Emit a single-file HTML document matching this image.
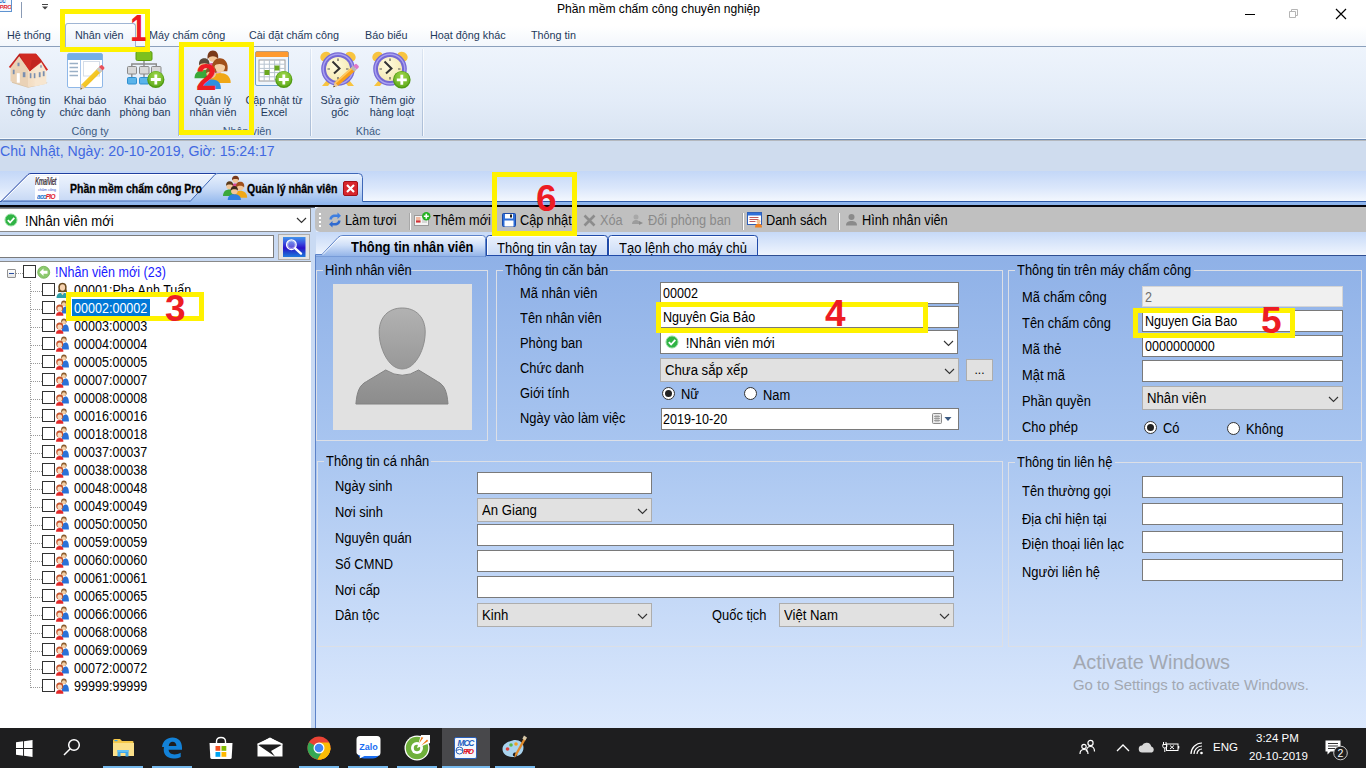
<!DOCTYPE html>
<html lang="vi"><head><meta charset="utf-8"><title>Phần mềm chấm công chuyên nghiệp</title>
<style>

*{box-sizing:border-box;margin:0;padding:0}
html,body{width:1366px;height:768px;overflow:hidden;background:#fff;font-family:"Liberation Sans",sans-serif;color:#000}
.a{position:absolute}
.t{position:absolute;white-space:nowrap;line-height:1}
.lbl{position:absolute;white-space:nowrap;font-size:13.8px;line-height:16px;height:16px;color:#000}
.inp{position:absolute;background:#fff;border:1px solid #7a7a7a;font-size:13.8px;line-height:20px;padding-left:2px;white-space:nowrap;overflow:hidden}
.cmb{position:absolute;background:#e1e1e1;border:1px solid #adadad;font-size:14px;line-height:21px;padding-left:4px;white-space:nowrap;overflow:hidden}
.grp{position:absolute;border:1px solid #c9d6ea}
.grp>span{position:absolute;top:-9px;left:6px;font-size:13.3px;line-height:16px;padding:0 2px;white-space:nowrap}
.rb{position:absolute;width:13px;height:13px;border-radius:50%;background:#fff;border:1px solid #333}
.rb.on::after{content:"";position:absolute;left:2px;top:2px;width:7px;height:7px;border-radius:50%;background:#222}
.ybox{position:absolute;border:4px solid #fff200}
.num{position:absolute;font-weight:bold;color:#ed1c24;font-size:37px;line-height:1;white-space:nowrap}
.rl{position:absolute;font-size:10.8px;line-height:12px;color:#1e395b;text-align:center;white-space:nowrap;transform:translateX(-50%)}
.cb{position:absolute;width:13px;height:13px;background:#fff;border:1px solid #333}
.tr{position:absolute;font-size:13.8px;line-height:18px;height:16px;white-space:nowrap}
.chev{position:absolute;width:10px;height:6px}
.sx{transform:scaleX(var(--k));transform-origin:0 50%}
.sxi{display:inline-block;transform:scaleX(.91);transform-origin:0 50%}
.cmb .sxi{transform:scaleX(.94)}
.tr{transform:scaleX(.91);transform-origin:0 50%}
.lbl{transform:scaleX(.935);transform-origin:0 50%}

</style></head><body>
<div class="a" style="left:0;top:0;width:1366px;height:46px;background:linear-gradient(#fff 0,#fff 26px,#f3f7fc 45px)"></div>
<div class="t" style="left:557px;top:3px;font-size:12.1px;color:#000">Phần mềm chấm công chuyên nghiệp</div>
<svg class="a" style="left:1240px;top:5px" width="120" height="20" viewBox="0 0 120 20"><path d="M5 9.5h10" stroke="#000" stroke-width="1"/><path d="M49.5 6.5h6v6h-6zM51.5 6.5v-2h6v6h-2" fill="none" stroke="#b5b5b5" stroke-width="1"/><path d="M96 4l10 10M106 4l-10 10" stroke="#000" stroke-width="1.2"/></svg>
<div class="a" style="left:0;top:0;width:12px;height:12px;background:#f4f8fe;border-right:1px solid #5f93d0;border-bottom:1px solid #5f93d0;overflow:hidden"><div class="t" style="left:-5px;top:-3px;font-size:7px;font-weight:bold;font-style:italic;color:#1f6fc8;letter-spacing:-.4px">acc</div><div class="t" style="left:-4px;top:4px;font-size:6px;font-weight:bold;font-style:italic;letter-spacing:-.4px"><span style="color:#1f6fc8">S</span><span style="color:#e0202a">PRO</span></div></div>
<div class="a" style="left:21px;top:2px;width:1px;height:16px;background:#8a9bb5"></div>
<svg class="a" style="left:41px;top:3px" width="8" height="8" viewBox="0 0 8 8"><path d="M1 1.5h6" stroke="#444" stroke-width="1"/><path d="M1 3.5h6l-3 3z" fill="#444"/></svg>
<div class="a" style="left:0;top:46px;width:1366px;height:1px;background:#8ba0bc"></div>
<div class="a" style="left:65px;top:23px;width:71px;height:24px;background:linear-gradient(#fdfeff,#eaf1fb);border:1px solid #9fb5d4;border-bottom:none;border-radius:3px 3px 0 0"></div>
<div class="t" style="left:7px;top:30px;font-size:10.8px;color:#1e395b">Hệ thống</div>
<div class="t" style="left:75px;top:30px;font-size:10.8px;color:#1e395b">Nhân viên</div>
<div class="t" style="left:149px;top:30px;font-size:10.8px;color:#1e395b">Máy chấm công</div>
<div class="t" style="left:249px;top:30px;font-size:10.8px;color:#1e395b">Cài đặt chấm công</div>
<div class="t" style="left:365px;top:30px;font-size:10.8px;color:#1e395b">Báo biểu</div>
<div class="t" style="left:430px;top:30px;font-size:10.8px;color:#1e395b">Hoạt động khác</div>
<div class="t" style="left:531px;top:30px;font-size:10.8px;color:#1e395b">Thông tin</div>
<div class="a" style="left:0;top:47px;width:1366px;height:91px;background:linear-gradient(#eef4fc,#e3ecf8 60%,#d9e4f2)"></div>
<div class="a" style="left:0;top:138px;width:1366px;height:1px;background:#f4f8fd"></div>
<div class="a" style="left:0;top:139px;width:1366px;height:1px;background:#6f8db5"></div>
<div class="a" style="left:0;top:140px;width:1366px;height:1px;background:#b4b8be"></div>
<div class="a" style="left:178px;top:49px;width:1px;height:87px;background:linear-gradient(rgba(160,180,205,0.2),#a9bcd6)"></div>
<div class="a" style="left:179px;top:49px;width:1px;height:87px;background:rgba(255,255,255,.7)"></div>
<div class="a" style="left:310px;top:49px;width:1px;height:87px;background:linear-gradient(rgba(160,180,205,0.2),#a9bcd6)"></div>
<div class="a" style="left:311px;top:49px;width:1px;height:87px;background:rgba(255,255,255,.7)"></div>
<div class="a" style="left:422px;top:49px;width:1px;height:87px;background:linear-gradient(rgba(160,180,205,0.2),#a9bcd6)"></div>
<div class="a" style="left:423px;top:49px;width:1px;height:87px;background:rgba(255,255,255,.7)"></div>
<svg class="a" style="left:0;top:47px" width="430" height="48" viewBox="0 47 430 48">
<defs><radialGradient id="gp" cx=".5" cy=".3" r=".8"><stop offset="0" stop-color="#9fd64a"/><stop offset="1" stop-color="#5aa818"/></radialGradient><linearGradient id="gw" x1="0" x2="1"><stop offset="0" stop-color="#f3dcc0"/><stop offset="1" stop-color="#fbeedd"/></linearGradient><linearGradient id="gr" x1="0" x2="0" y1="0" y2="1"><stop offset="0" stop-color="#b81c1c"/><stop offset="1" stop-color="#d83028"/></linearGradient><linearGradient id="gy" x1="0" x2="1" y1="0" y2="1"><stop offset="0" stop-color="#ffe34a"/><stop offset="1" stop-color="#e8a800"/></linearGradient><radialGradient id="gf" cx=".4" cy=".35" r=".8"><stop offset="0" stop-color="#fffbe0"/><stop offset="1" stop-color="#f3e6a8"/></radialGradient></defs>
<g transform="translate(8.800 53.700)"><path d="M3 29l16.300 5 18-4 1.500-1.500-19 3.500-16-4.500z" fill="#d8c4a8"/><path d="M1.700 13.500L10.400 2l9 12v19.600L1.700 27.600z" fill="#ead2b6"/><path d="M19.300 14L32.500 7.500l4.800 8V30l-18 3.600z" fill="url(#gw)"/><path d="M26 17l6.500-9.500 5 8.500v14l-11.500 2.500z" fill="#f7e6d0"/><path d="M10.400 0H27.200L32.500 6.400 39.300 16l-1.800 1-5-8.500L21 17.500 10.400 2.500 1.500 14.300 0 13.300z" fill="url(#gr)"/><path d="M10.400 0H27.200l5.300 6.400L21 17.500z" fill="#cf2a22"/><path d="M23 6.400h9.500L21 17.500z" fill="#c0241e"/><rect x="8.700" y="9" width="2" height="3.500" fill="#7a8fb0"/><rect x="4" y="16" width="1.800" height="4.500" fill="#7a8fb0"/><rect x="8" y="19.500" width="3" height="9.500" fill="#fff"/><rect x="14" y="18.500" width="2.600" height="5" fill="#7a8fb0"/><rect x="21" y="19.500" width="1.600" height="5" fill="#7a8fb0"/><rect x="25" y="19.500" width="1.600" height="5" fill="#7a8fb0"/><rect x="30" y="18.500" width="1.800" height="5" fill="#7a8fb0"/><rect x="34" y="17.500" width="1.800" height="5" fill="#7a8fb0"/><rect x="31.500" y="11.500" width="1.400" height="2.500" fill="#7a8fb0"/></g>
<g><rect x="67.500" y="53.500" width="35" height="34" rx="1.500" fill="#fff" stroke="#8fb8e8"/><path d="M67.500 55q0-1.500 1.500-1.500h32q1.500 0 1.500 1.500v5h-35z" fill="#74aee6"/><path d="M80.500 60v27" stroke="#a9c8ee"/><path d="M69.500 63.500h8.500M69.500 67.500h8.500M69.500 71.500h8.500M69.500 75.500h8.500" stroke="#9ab0c6" stroke-width="1.300"/><rect x="83.500" y="61.500" width="16" height="14.500" fill="#fff" stroke="#d5dde8"/><path d="M80.400 89.500l1.300-5.300L98.500 67.500l3.500 3.500-17 16.700z" fill="url(#gy)"/><path d="M80.400 89.500l1.300-5.300 3.300 3.500z" fill="#e8c8a0"/><path d="M80.400 89.500l.5-1.800 1.200 1.200z" fill="#333"/><path d="M96.500 69.500l2.500-2.500 3.500 3.500-2.500 2.500z" fill="#c8c8c8"/><path d="M99 67l1.500-1.500q1-1 2 0l1.500 1.500q1 1 0 2L102.500 70.500z" fill="#e8505a"/></g>
<g><path d="M144 60v4M131.800 67v-3h24.500v3M144 64v3M131.800 74v4M144 74v4" stroke="#8a8a8a" stroke-width="1.400" fill="none"/><rect x="136" y="51.500" width="16" height="9" rx="1.500" fill="#7cc01e" stroke="#5a9a10"/><rect x="127.500" y="66.500" width="9" height="7.500" rx="1" fill="#d8d8d8" stroke="#8a8a8a"/><rect x="139.500" y="66.500" width="9.500" height="7.500" rx="1" fill="#d8d8d8" stroke="#8a8a8a"/><rect x="151.500" y="66.500" width="9.500" height="7.500" rx="1" fill="#d8d8d8" stroke="#8a8a8a"/><rect x="127.500" y="77.500" width="9" height="6.500" rx="1" fill="#5ab4ea" stroke="#2f8fd0"/><rect x="139.500" y="77.500" width="9.500" height="6.500" rx="1" fill="#5ab4ea" stroke="#2f8fd0"/><circle cx="155.8" cy="79.5" r="8.6" fill="#4f9a12"/><circle cx="155.8" cy="78.9" r="7.6" fill="url(#gp)"/><path d="M155.8 74.5v10M150.8 79.5h10" stroke="#fff" stroke-width="2.800"/></g>
<g transform="translate(194.500 50) scale(1.150 1.180)"><circle cx="16" cy="6" r="4" fill="#f2c79a"/><path d="M11.500 8c-.8-5 1.500-7.500 4.500-7.500s5.300 2.500 4.500 7.500c-1-3.500-8-3.500-9 0z" fill="#7a3a1a"/><path d="M9 19c0-6 3-8 7-8s7 2 7 8z" fill="#e0559a"/><circle cx="8.500" cy="13" r="4.200" fill="#f2c79a"/><path d="M4 13c-.5-4 1.500-6 4.500-6s5 2 4.500 6c-1.500-2.500-7.500-2.500-9 0z" fill="#5a4a3a"/><path d="M0 24c0-5 3.500-7 8.500-7S17 19 17 24z" fill="#3aa83a"/><path d="M15.500 18c-1.500-7 2-11 6.500-11s8 4 6.500 11z" fill="#a0501c"/><circle cx="22" cy="14.500" r="4.600" fill="#f4cfa6"/><path d="M17 14c0-4 2-6.500 5-6.500s5.500 2.500 5 6.500c-2-2.500-8-3-10 0z" fill="#a0501c"/><path d="M13 28c0-6 4-8.500 9-8.500s9.500 2.500 9.500 8.500z" fill="#f0a818"/><circle cx="14.500" cy="20" r="4.200" fill="#f2c79a"/><path d="M10 20c-.5-4 1.500-6 4.500-6s5 2 4.500 6c-1.500-2.500-7.500-2.500-9 0z" fill="#8a5a2a"/><path d="M6 33c0-6 3.500-8 8.500-8S23 27 23 33z" fill="#2f8fe0"/></g>
<g><rect x="255.500" y="51.500" width="33" height="34" rx="1.500" fill="#eef5fc" stroke="#6f9fd0"/><path d="M255.500 53q0-1.500 1.500-1.500h30q1.500 0 1.500 1.500v4h-33z" fill="#ff9a2e"/><rect x="259" y="60" width="26" height="21" fill="#fff" stroke="#9a9a9a" stroke-width="1"/><path d="M264.200 60v21M269.400 60v21M274.600 60v21M279.800 60v21M259 64.200h26M259 68.400h26M259 72.600h26M259 76.800h26" stroke="#b8c4d0" stroke-width="1"/><rect x="264.500" y="70" width="5" height="5" fill="#6aa81e"/><rect x="274.500" y="65.500" width="5" height="5" fill="#6aa81e"/><circle cx="283.8" cy="79.5" r="8.6" fill="#4f9a12"/><circle cx="283.8" cy="78.9" r="7.6" fill="url(#gp)"/><path d="M283.8 74.5v10M278.8 79.5h10" stroke="#fff" stroke-width="2.800"/></g>
<g><ellipse cx="325.5" cy="56.500" rx="5.500" ry="4.500" fill="#f8c440" transform="rotate(-35 325.5 56.500)"/><ellipse cx="350.5" cy="56.500" rx="5.500" ry="4.500" fill="#f8c440" transform="rotate(35 350.5 56.500)"/><path d="M327 80l-5 6h6l3-4zM349 80l5 6h-6l-3-4z" fill="#f8c440"/><circle cx="338" cy="69" r="16.800" fill="#7468d4"/><circle cx="338" cy="69" r="14.800" fill="none" stroke="#a9a0f0" stroke-width="1.500"/><circle cx="338" cy="69" r="12" fill="url(#gf)"/><path d="M338 58.500v2.500M338 77v2.500M327.5 69h2.500M346 69h2.500" stroke="#555" stroke-width="1.200"/><path d="M332.5 61.500l7 7-5.500 5" fill="none" stroke="#333" stroke-width="2"/><path d="M333.300 87.300l1.500-5 17.500-15.500 3.300 3.600-17.500 15.400z" fill="#f8a018"/><path d="M334.800 82.300l17.500-15.500 1.200 1.300-17.600 15.500z" fill="#ffc860"/><path d="M333.300 87.300l1.500-5 3.300 3.500z" fill="#e8c8a0"/><path d="M333.300 87.300l.6-1.800 1.200 1.200z" fill="#333"/><path d="M350.800 68l2.500-2.200 3.300 3.600-2.500 2.200z" fill="#b8b8b8"/><path d="M353.300 65.800l1.800-1.600q1-.8 2 .2l1.500 1.600q.8 1-.2 1.800L356.600 69.400z" fill="#e078c8"/></g>
<g><ellipse cx="377.5" cy="56.500" rx="5.500" ry="4.500" fill="#f8c440" transform="rotate(-35 377.5 56.500)"/><ellipse cx="402.5" cy="56.500" rx="5.500" ry="4.500" fill="#f8c440" transform="rotate(35 402.5 56.500)"/><path d="M379 80l-5 6h6l3-4zM401 80l5 6h-6l-3-4z" fill="#f8c440"/><circle cx="390" cy="69" r="16.800" fill="#7468d4"/><circle cx="390" cy="69" r="14.800" fill="none" stroke="#a9a0f0" stroke-width="1.500"/><circle cx="390" cy="69" r="12" fill="url(#gf)"/><path d="M390 58.500v2.500M390 77v2.500M379.5 69h2.500M398 69h2.500" stroke="#555" stroke-width="1.200"/><path d="M384.5 61.500l7 7-5.500 5" fill="none" stroke="#333" stroke-width="2"/><circle cx="401.8" cy="79.8" r="8.8" fill="#4f9a12"/><circle cx="401.8" cy="79.2" r="7.800000000000001" fill="url(#gp)"/><path d="M401.8 74.8v10M396.8 79.8h10" stroke="#fff" stroke-width="2.800"/></g>
</svg>
<div class="rl" style="left:28px;top:94px">Thông tin<br>công ty</div>
<div class="rl" style="left:85px;top:94px">Khai báo<br>chức danh</div>
<div class="rl" style="left:145px;top:94px">Khai báo<br>phòng ban</div>
<div class="rl" style="left:213px;top:94px">Quản lý<br>nhân viên</div>
<div class="rl" style="left:274px;top:94px">Cập nhật từ<br>Excel</div>
<div class="rl" style="left:340px;top:94px">Sửa giờ<br>gốc</div>
<div class="rl" style="left:392px;top:94px">Thêm giờ<br>hàng loạt</div>
<div class="rl" style="left:90px;top:125px;color:#3b5a82">Công ty</div>
<div class="rl" style="left:247px;top:125px;color:#3b5a82">Nhân viên</div>
<div class="rl" style="left:368px;top:125px;color:#3b5a82">Khác</div>
<div class="a" style="left:0;top:141px;width:1366px;height:30px;background:#cfdcee"></div>
<div class="t" style="left:0;top:144px;font-size:14.14px;color:#4169e1">Chủ Nhật, Ngày: 20-10-2019, Giờ: 15:24:17</div>
<div class="a" style="left:0;top:171px;width:1366px;height:34px;background:linear-gradient(#c3d7f7,#dbe7fb 50%,#f4f8fe 90%)"></div>
<div class="a" style="left:0;top:201px;width:1366px;height:1px;background:#2f5aa8"></div>
<div class="a" style="left:0;top:202px;width:1366px;height:3px;background:#8db4ec"></div>
<div class="a" style="left:0;top:205px;width:1366px;height:2px;background:#05050c"></div>
<div class="a" style="left:0;top:207px;width:315px;height:1px;background:#5a6270"></div>
<svg class="a" style="left:0;top:171px" width="380" height="34" viewBox="0 0 380 34">
<defs><linearGradient id="da" x1="0" x2="0" y1="0" y2="1"><stop offset="0" stop-color="#e9f1fd"/><stop offset=".5" stop-color="#c6d9f6"/><stop offset="1" stop-color="#8db4ec"/></linearGradient>
<linearGradient id="di" x1="0" x2="0" y1="0" y2="1"><stop offset="0" stop-color="#eef4fd"/><stop offset=".5" stop-color="#dde8fa"/><stop offset="1" stop-color="#c6d8f5"/></linearGradient></defs>
<path d="M1 30.500L28 3.500q1-1 3-1H216L190 30.500z" fill="url(#di)"/>
<path d="M2.500 30.500L29 4.200q1-.7 3-.7H214" fill="none" stroke="#fff" stroke-width="1"/>
<path d="M1 30.500L28 3.500q1-1 3-1H216" fill="none" stroke="#1f3fa0" stroke-width="1"/>
<path d="M1 30h189" stroke="#3f68b8" stroke-width="1"/>
<path d="M190 30.500L215 3.500q1-1 3-1H358.500q4 0 4 4V30.500V34H0V31z" fill="url(#da)"/>
<path d="M190 30.500L215 3.500q1-1 3-1H358.500q4 0 4 4V30.500" fill="none" stroke="#3f68b8" stroke-width="1"/>
</svg>
<div class="a" style="left:35px;top:176px;width:24px;height:24px;background:#fdfdff;overflow:hidden"><div class="t" style="left:0;top:1px;font-size:9px;font-weight:bold;font-style:italic;color:#4a4048;letter-spacing:-.8px;transform:scale(.66,1.2);transform-origin:0 0">KmaiViet</div><div class="t" style="left:3px;top:12px;font-size:4px;color:#3a5fd0;letter-spacing:-.2px">chấm công</div><div class="t" style="left:2px;top:17px;font-size:7.500px;font-weight:bold;font-style:italic;letter-spacing:-.8px;transform:scale(.86,.95);transform-origin:0 0"><span style="color:#1f78d0">acc</span><span style="color:#e0202a">PIO</span></div></div>
<div class="a" style="left:69px;top:181px;width:133px;height:16px;overflow:hidden"><div class="t sx" style="left:1px;top:2px;font-size:12px;font-weight:bold;-webkit-text-stroke:.3px #000;--k:.875">Phần mềm chấm công Pro</div></div>
<svg class="a" style="left:223px;top:175px" width="25" height="25" viewBox="0 0 32 32">
<circle cx="16" cy="6" r="4" fill="#f2c79a"/><path d="M11.500 7c-.5-4 1.500-6 4.500-6s5 2 4.500 6c-1-2.500-8-2.500-9 0z" fill="#7a3a1a"/><path d="M9 19c0-6 3-8 7-8s7 2 7 8z" fill="#d8458a"/>
<circle cx="8.500" cy="14" r="4.200" fill="#f2c79a"/><path d="M4 14c-.5-4 1.500-6 4.500-6s5 2 4.500 6c-1.500-2.500-7.500-2.500-9 0z" fill="#5a3a1a"/><path d="M0 27c0-6 3.500-8.500 8.500-8.500S17 21 17 27z" fill="#3aa83a"/>
<circle cx="22" cy="15" r="4.500" fill="#f2c79a"/><path d="M17 16c-1-5 1.500-7.500 5-7.500s6 2.500 5 7.500c-1.500-3-8.500-3-10 0z" fill="#a0501c"/><path d="M13 29c0-6 4-9 9-9s9 3 9 9z" fill="#f0a818"/>
<circle cx="14.500" cy="20.500" r="4.200" fill="#f2c79a"/><path d="M10 20c-.5-4 1.500-6 4.500-6s5 2 4.500 6c-1.500-2.500-7.500-2.500-9 0z" fill="#3a2a1a"/><path d="M6 32c0-5 3.500-7.500 8.500-7.500S23 27 23 32z" fill="#2f7fe0"/>
</svg>
<div class="t sx" style="left:247px;top:183px;font-size:12px;font-weight:bold;-webkit-text-stroke:.3px #000;--k:.875">Quản lý nhân viên</div>
<svg class="a" style="left:343px;top:181px" width="15" height="15" viewBox="0 0 15 15"><rect x="0.500" y="0.500" width="14" height="14" rx="1.500" fill="#d8262c" stroke="#a01018"/><path d="M4 4l7 7M11 4l-7 7" stroke="#fff" stroke-width="2.200"/></svg>
<div class="a" style="left:0;top:208px;width:316px;height:520px;background:#c9daf3"></div>
<div class="a" style="left:0;top:208px;width:311px;height:24px;background:#fff;border:1px solid #8a8a8a;border-left:none"></div>
<svg class="a" style="left:4px;top:213px" width="14" height="14" viewBox="0 0 14 14"><circle cx="7" cy="7" r="6" fill="#2fb344"/><circle cx="7" cy="7" r="6" fill="none" stroke="#8fdc9a" stroke-width="1"/><path d="M3.8 7.2l2.3 2.3 4.2-4.6" fill="none" stroke="#fff" stroke-width="1.8"/></svg>
<div class="t sx" style="left:25px;top:214px;font-size:14px;--k:.936">!Nhân viên mới</div>
<svg class="a" style="left:296px;top:217px" width="11" height="7" viewBox="0 0 11 7"><path d="M1 1l4.5 4.5L10 1" fill="none" stroke="#333" stroke-width="1.2"/></svg>
<div class="a" style="left:0;top:235px;width:274px;height:23px;background:#fff;border:1px solid #7a7a7a;border-left:none"></div>
<div class="a" style="left:278px;top:234px;width:32px;height:26px;background:#e3e3e3;border:1px solid #adadad"></div>
<svg class="a" style="left:283px;top:237px" width="23" height="20" viewBox="0 0 23 20"><defs><linearGradient id="sg" x1="0" x2="0" y1="0" y2="1"><stop offset="0" stop-color="#3f93ea"/><stop offset=".3" stop-color="#3a4fe0"/><stop offset=".55" stop-color="#2a10c8"/><stop offset=".8" stop-color="#1f4fd0"/><stop offset="1" stop-color="#1f78dc"/></linearGradient></defs><rect width="22.500" height="20" fill="url(#sg)"/><circle cx="8.400" cy="7.700" r="4.800" fill="#fff" fill-opacity=".25" stroke="#fff" stroke-width="1.300"/><circle cx="8.400" cy="7.700" r="3.600" fill="none" stroke="#fff" stroke-opacity=".6" stroke-width=".6"/><path d="M12.200 11.300l5.800 5.300" stroke="#fff" stroke-width="2.400" stroke-linecap="round"/></svg>
<div class="a" style="left:0;top:261px;width:311px;height:467px;background:#fff;border-top:1px solid #8a8a8a"></div>
<div class="a" style="left:30px;top:281px;width:1px;height:407px;border-left:1px dotted #9a9a9a"></div>
<div class="a" style="left:16px;top:273px;width:7px;height:1px;border-top:1px dotted #9a9a9a"></div>
<div class="a" style="left:7px;top:269px;width:9px;height:9px;border:1px solid #919191;background:linear-gradient(#fff,#e4e4e4);border-radius:1px"></div><div class="a" style="left:9px;top:273px;width:5px;height:1px;background:#2b4fa0"></div>
<div class="cb" style="left:23px;top:265px"></div>
<svg class="a" style="left:37px;top:265px" width="14" height="14" viewBox="0 0 14 14"><circle cx="6.700" cy="7.300" r="6" fill="#8cc96e" stroke="#6fb050" stroke-width=".8"/><path d="M2.500 7.300L6.500 3.500V5.800H10.500V8.800H6.500V11.100z" fill="#fff"/></svg>
<div class="tr" style="left:55px;top:264px;color:#1a1aff">!Nhân viên mới (23)</div>
<div class="a" style="left:31px;top:291px;width:11px;height:1px;border-top:1px dotted #9a9a9a"></div>
<div class="cb" style="left:42px;top:283px"></div>
<svg class="a" style="left:56px;top:282px" width="13" height="16" viewBox="0 0 13 16"><path d="M2.5 7c-.8-3.5.8-6.3 4-6.3s4.8 2.800 4 6.300l.5 3h-9z" fill="#6b4a1e"/><ellipse cx="6.500" cy="5.500" rx="2.600" ry="3.200" fill="#f7d3b0"/><path d="M.5 16c0-4 2.500-5.200 6-5.200s6 1.200 6 5.200z" fill="#2e9fa8"/><path d="M4.800 10.800l1.700 2.500 1.700-2.500z" fill="#f7d3b0"/></svg>
<div class="tr" style="left:74px;top:282px">00001:Pha Anh Tuấn</div>
<div class="a" style="left:31px;top:309px;width:11px;height:1px;border-top:1px dotted #9a9a9a"></div>
<div class="cb" style="left:42px;top:301px"></div>
<svg class="a" style="left:56px;top:300px" width="13" height="16" viewBox="0 0 13 16"><circle cx="7.900" cy="3.300" r="2.700" fill="#8a5a2a"/><circle cx="7.900" cy="4.300" r="2" fill="#f4cfa6"/><path d="M5.800 13.500C5.800 8.500 7.800 6.600 9.800 6.600S12.900 8.800 12.900 13.500z" fill="#2a72d8"/><circle cx="3.700" cy="8.100" r="3.500" fill="#c8522a"/><circle cx="3.700" cy="9" r="2.400" fill="#f8dcc0"/><path d="M0 15.800C0 13 1.500 12 3.700 12S7.400 13 7.400 15.800z" fill="#e22828"/></svg>
<div class="a" style="left:72px;top:299px;width:78px;height:17px;background:#0078d7"></div>
<div class="tr" style="left:74px;top:300px;color:#fff">00002:00002</div>
<div class="a" style="left:31px;top:327px;width:11px;height:1px;border-top:1px dotted #9a9a9a"></div>
<div class="cb" style="left:42px;top:319px"></div>
<svg class="a" style="left:56px;top:318px" width="13" height="16" viewBox="0 0 13 16"><circle cx="7.900" cy="3.300" r="2.700" fill="#8a5a2a"/><circle cx="7.900" cy="4.300" r="2" fill="#f4cfa6"/><path d="M5.800 13.500C5.800 8.500 7.800 6.600 9.800 6.600S12.900 8.800 12.900 13.500z" fill="#2a72d8"/><circle cx="3.700" cy="8.100" r="3.500" fill="#c8522a"/><circle cx="3.700" cy="9" r="2.400" fill="#f8dcc0"/><path d="M0 15.800C0 13 1.500 12 3.700 12S7.400 13 7.400 15.800z" fill="#e22828"/></svg>
<div class="tr" style="left:74px;top:318px">00003:00003</div>
<div class="a" style="left:31px;top:345px;width:11px;height:1px;border-top:1px dotted #9a9a9a"></div>
<div class="cb" style="left:42px;top:337px"></div>
<svg class="a" style="left:56px;top:336px" width="13" height="16" viewBox="0 0 13 16"><circle cx="7.900" cy="3.300" r="2.700" fill="#8a5a2a"/><circle cx="7.900" cy="4.300" r="2" fill="#f4cfa6"/><path d="M5.800 13.500C5.800 8.500 7.800 6.600 9.800 6.600S12.900 8.800 12.900 13.500z" fill="#2a72d8"/><circle cx="3.700" cy="8.100" r="3.500" fill="#c8522a"/><circle cx="3.700" cy="9" r="2.400" fill="#f8dcc0"/><path d="M0 15.800C0 13 1.500 12 3.700 12S7.400 13 7.400 15.800z" fill="#e22828"/></svg>
<div class="tr" style="left:74px;top:336px">00004:00004</div>
<div class="a" style="left:31px;top:363px;width:11px;height:1px;border-top:1px dotted #9a9a9a"></div>
<div class="cb" style="left:42px;top:355px"></div>
<svg class="a" style="left:56px;top:354px" width="13" height="16" viewBox="0 0 13 16"><circle cx="7.900" cy="3.300" r="2.700" fill="#8a5a2a"/><circle cx="7.900" cy="4.300" r="2" fill="#f4cfa6"/><path d="M5.800 13.500C5.800 8.500 7.800 6.600 9.800 6.600S12.900 8.800 12.900 13.500z" fill="#2a72d8"/><circle cx="3.700" cy="8.100" r="3.500" fill="#c8522a"/><circle cx="3.700" cy="9" r="2.400" fill="#f8dcc0"/><path d="M0 15.800C0 13 1.500 12 3.700 12S7.400 13 7.400 15.800z" fill="#e22828"/></svg>
<div class="tr" style="left:74px;top:354px">00005:00005</div>
<div class="a" style="left:31px;top:381px;width:11px;height:1px;border-top:1px dotted #9a9a9a"></div>
<div class="cb" style="left:42px;top:373px"></div>
<svg class="a" style="left:56px;top:372px" width="13" height="16" viewBox="0 0 13 16"><circle cx="7.900" cy="3.300" r="2.700" fill="#8a5a2a"/><circle cx="7.900" cy="4.300" r="2" fill="#f4cfa6"/><path d="M5.800 13.500C5.800 8.500 7.800 6.600 9.800 6.600S12.900 8.800 12.900 13.500z" fill="#2a72d8"/><circle cx="3.700" cy="8.100" r="3.500" fill="#c8522a"/><circle cx="3.700" cy="9" r="2.400" fill="#f8dcc0"/><path d="M0 15.800C0 13 1.500 12 3.700 12S7.400 13 7.400 15.800z" fill="#e22828"/></svg>
<div class="tr" style="left:74px;top:372px">00007:00007</div>
<div class="a" style="left:31px;top:399px;width:11px;height:1px;border-top:1px dotted #9a9a9a"></div>
<div class="cb" style="left:42px;top:391px"></div>
<svg class="a" style="left:56px;top:390px" width="13" height="16" viewBox="0 0 13 16"><circle cx="7.900" cy="3.300" r="2.700" fill="#8a5a2a"/><circle cx="7.900" cy="4.300" r="2" fill="#f4cfa6"/><path d="M5.800 13.500C5.800 8.500 7.800 6.600 9.800 6.600S12.900 8.800 12.900 13.500z" fill="#2a72d8"/><circle cx="3.700" cy="8.100" r="3.500" fill="#c8522a"/><circle cx="3.700" cy="9" r="2.400" fill="#f8dcc0"/><path d="M0 15.800C0 13 1.500 12 3.700 12S7.400 13 7.400 15.800z" fill="#e22828"/></svg>
<div class="tr" style="left:74px;top:390px">00008:00008</div>
<div class="a" style="left:31px;top:417px;width:11px;height:1px;border-top:1px dotted #9a9a9a"></div>
<div class="cb" style="left:42px;top:409px"></div>
<svg class="a" style="left:56px;top:408px" width="13" height="16" viewBox="0 0 13 16"><circle cx="7.900" cy="3.300" r="2.700" fill="#8a5a2a"/><circle cx="7.900" cy="4.300" r="2" fill="#f4cfa6"/><path d="M5.800 13.500C5.800 8.500 7.800 6.600 9.800 6.600S12.900 8.800 12.900 13.500z" fill="#2a72d8"/><circle cx="3.700" cy="8.100" r="3.500" fill="#c8522a"/><circle cx="3.700" cy="9" r="2.400" fill="#f8dcc0"/><path d="M0 15.800C0 13 1.500 12 3.700 12S7.400 13 7.400 15.800z" fill="#e22828"/></svg>
<div class="tr" style="left:74px;top:408px">00016:00016</div>
<div class="a" style="left:31px;top:435px;width:11px;height:1px;border-top:1px dotted #9a9a9a"></div>
<div class="cb" style="left:42px;top:427px"></div>
<svg class="a" style="left:56px;top:426px" width="13" height="16" viewBox="0 0 13 16"><circle cx="7.900" cy="3.300" r="2.700" fill="#8a5a2a"/><circle cx="7.900" cy="4.300" r="2" fill="#f4cfa6"/><path d="M5.800 13.500C5.800 8.500 7.800 6.600 9.800 6.600S12.900 8.800 12.900 13.500z" fill="#2a72d8"/><circle cx="3.700" cy="8.100" r="3.500" fill="#c8522a"/><circle cx="3.700" cy="9" r="2.400" fill="#f8dcc0"/><path d="M0 15.800C0 13 1.500 12 3.700 12S7.400 13 7.400 15.800z" fill="#e22828"/></svg>
<div class="tr" style="left:74px;top:426px">00018:00018</div>
<div class="a" style="left:31px;top:453px;width:11px;height:1px;border-top:1px dotted #9a9a9a"></div>
<div class="cb" style="left:42px;top:445px"></div>
<svg class="a" style="left:56px;top:444px" width="13" height="16" viewBox="0 0 13 16"><circle cx="7.900" cy="3.300" r="2.700" fill="#8a5a2a"/><circle cx="7.900" cy="4.300" r="2" fill="#f4cfa6"/><path d="M5.800 13.500C5.800 8.500 7.800 6.600 9.800 6.600S12.900 8.800 12.900 13.500z" fill="#2a72d8"/><circle cx="3.700" cy="8.100" r="3.500" fill="#c8522a"/><circle cx="3.700" cy="9" r="2.400" fill="#f8dcc0"/><path d="M0 15.800C0 13 1.500 12 3.700 12S7.400 13 7.400 15.800z" fill="#e22828"/></svg>
<div class="tr" style="left:74px;top:444px">00037:00037</div>
<div class="a" style="left:31px;top:471px;width:11px;height:1px;border-top:1px dotted #9a9a9a"></div>
<div class="cb" style="left:42px;top:463px"></div>
<svg class="a" style="left:56px;top:462px" width="13" height="16" viewBox="0 0 13 16"><circle cx="7.900" cy="3.300" r="2.700" fill="#8a5a2a"/><circle cx="7.900" cy="4.300" r="2" fill="#f4cfa6"/><path d="M5.800 13.500C5.800 8.500 7.800 6.600 9.800 6.600S12.900 8.800 12.900 13.500z" fill="#2a72d8"/><circle cx="3.700" cy="8.100" r="3.500" fill="#c8522a"/><circle cx="3.700" cy="9" r="2.400" fill="#f8dcc0"/><path d="M0 15.800C0 13 1.500 12 3.700 12S7.400 13 7.400 15.800z" fill="#e22828"/></svg>
<div class="tr" style="left:74px;top:462px">00038:00038</div>
<div class="a" style="left:31px;top:489px;width:11px;height:1px;border-top:1px dotted #9a9a9a"></div>
<div class="cb" style="left:42px;top:481px"></div>
<svg class="a" style="left:56px;top:480px" width="13" height="16" viewBox="0 0 13 16"><circle cx="7.900" cy="3.300" r="2.700" fill="#8a5a2a"/><circle cx="7.900" cy="4.300" r="2" fill="#f4cfa6"/><path d="M5.800 13.500C5.800 8.500 7.800 6.600 9.800 6.600S12.900 8.800 12.900 13.500z" fill="#2a72d8"/><circle cx="3.700" cy="8.100" r="3.500" fill="#c8522a"/><circle cx="3.700" cy="9" r="2.400" fill="#f8dcc0"/><path d="M0 15.800C0 13 1.500 12 3.700 12S7.400 13 7.400 15.800z" fill="#e22828"/></svg>
<div class="tr" style="left:74px;top:480px">00048:00048</div>
<div class="a" style="left:31px;top:507px;width:11px;height:1px;border-top:1px dotted #9a9a9a"></div>
<div class="cb" style="left:42px;top:499px"></div>
<svg class="a" style="left:56px;top:498px" width="13" height="16" viewBox="0 0 13 16"><circle cx="7.900" cy="3.300" r="2.700" fill="#8a5a2a"/><circle cx="7.900" cy="4.300" r="2" fill="#f4cfa6"/><path d="M5.800 13.500C5.800 8.500 7.800 6.600 9.800 6.600S12.900 8.800 12.900 13.500z" fill="#2a72d8"/><circle cx="3.700" cy="8.100" r="3.500" fill="#c8522a"/><circle cx="3.700" cy="9" r="2.400" fill="#f8dcc0"/><path d="M0 15.800C0 13 1.500 12 3.700 12S7.400 13 7.400 15.800z" fill="#e22828"/></svg>
<div class="tr" style="left:74px;top:498px">00049:00049</div>
<div class="a" style="left:31px;top:525px;width:11px;height:1px;border-top:1px dotted #9a9a9a"></div>
<div class="cb" style="left:42px;top:517px"></div>
<svg class="a" style="left:56px;top:516px" width="13" height="16" viewBox="0 0 13 16"><circle cx="7.900" cy="3.300" r="2.700" fill="#8a5a2a"/><circle cx="7.900" cy="4.300" r="2" fill="#f4cfa6"/><path d="M5.800 13.500C5.800 8.500 7.800 6.600 9.800 6.600S12.900 8.800 12.900 13.500z" fill="#2a72d8"/><circle cx="3.700" cy="8.100" r="3.500" fill="#c8522a"/><circle cx="3.700" cy="9" r="2.400" fill="#f8dcc0"/><path d="M0 15.800C0 13 1.500 12 3.700 12S7.400 13 7.400 15.800z" fill="#e22828"/></svg>
<div class="tr" style="left:74px;top:516px">00050:00050</div>
<div class="a" style="left:31px;top:543px;width:11px;height:1px;border-top:1px dotted #9a9a9a"></div>
<div class="cb" style="left:42px;top:535px"></div>
<svg class="a" style="left:56px;top:534px" width="13" height="16" viewBox="0 0 13 16"><circle cx="7.900" cy="3.300" r="2.700" fill="#8a5a2a"/><circle cx="7.900" cy="4.300" r="2" fill="#f4cfa6"/><path d="M5.800 13.500C5.800 8.500 7.800 6.600 9.800 6.600S12.900 8.800 12.900 13.500z" fill="#2a72d8"/><circle cx="3.700" cy="8.100" r="3.500" fill="#c8522a"/><circle cx="3.700" cy="9" r="2.400" fill="#f8dcc0"/><path d="M0 15.800C0 13 1.500 12 3.700 12S7.400 13 7.400 15.800z" fill="#e22828"/></svg>
<div class="tr" style="left:74px;top:534px">00059:00059</div>
<div class="a" style="left:31px;top:561px;width:11px;height:1px;border-top:1px dotted #9a9a9a"></div>
<div class="cb" style="left:42px;top:553px"></div>
<svg class="a" style="left:56px;top:552px" width="13" height="16" viewBox="0 0 13 16"><circle cx="7.900" cy="3.300" r="2.700" fill="#8a5a2a"/><circle cx="7.900" cy="4.300" r="2" fill="#f4cfa6"/><path d="M5.800 13.500C5.800 8.500 7.800 6.600 9.800 6.600S12.900 8.800 12.900 13.500z" fill="#2a72d8"/><circle cx="3.700" cy="8.100" r="3.500" fill="#c8522a"/><circle cx="3.700" cy="9" r="2.400" fill="#f8dcc0"/><path d="M0 15.800C0 13 1.500 12 3.700 12S7.400 13 7.400 15.800z" fill="#e22828"/></svg>
<div class="tr" style="left:74px;top:552px">00060:00060</div>
<div class="a" style="left:31px;top:579px;width:11px;height:1px;border-top:1px dotted #9a9a9a"></div>
<div class="cb" style="left:42px;top:571px"></div>
<svg class="a" style="left:56px;top:570px" width="13" height="16" viewBox="0 0 13 16"><circle cx="7.900" cy="3.300" r="2.700" fill="#8a5a2a"/><circle cx="7.900" cy="4.300" r="2" fill="#f4cfa6"/><path d="M5.800 13.500C5.800 8.500 7.800 6.600 9.800 6.600S12.900 8.800 12.900 13.500z" fill="#2a72d8"/><circle cx="3.700" cy="8.100" r="3.500" fill="#c8522a"/><circle cx="3.700" cy="9" r="2.400" fill="#f8dcc0"/><path d="M0 15.800C0 13 1.500 12 3.700 12S7.400 13 7.400 15.800z" fill="#e22828"/></svg>
<div class="tr" style="left:74px;top:570px">00061:00061</div>
<div class="a" style="left:31px;top:597px;width:11px;height:1px;border-top:1px dotted #9a9a9a"></div>
<div class="cb" style="left:42px;top:589px"></div>
<svg class="a" style="left:56px;top:588px" width="13" height="16" viewBox="0 0 13 16"><circle cx="7.900" cy="3.300" r="2.700" fill="#8a5a2a"/><circle cx="7.900" cy="4.300" r="2" fill="#f4cfa6"/><path d="M5.800 13.500C5.800 8.500 7.800 6.600 9.800 6.600S12.900 8.800 12.900 13.500z" fill="#2a72d8"/><circle cx="3.700" cy="8.100" r="3.500" fill="#c8522a"/><circle cx="3.700" cy="9" r="2.400" fill="#f8dcc0"/><path d="M0 15.800C0 13 1.500 12 3.700 12S7.400 13 7.400 15.800z" fill="#e22828"/></svg>
<div class="tr" style="left:74px;top:588px">00065:00065</div>
<div class="a" style="left:31px;top:615px;width:11px;height:1px;border-top:1px dotted #9a9a9a"></div>
<div class="cb" style="left:42px;top:607px"></div>
<svg class="a" style="left:56px;top:606px" width="13" height="16" viewBox="0 0 13 16"><circle cx="7.900" cy="3.300" r="2.700" fill="#8a5a2a"/><circle cx="7.900" cy="4.300" r="2" fill="#f4cfa6"/><path d="M5.800 13.500C5.800 8.500 7.800 6.600 9.800 6.600S12.900 8.800 12.900 13.500z" fill="#2a72d8"/><circle cx="3.700" cy="8.100" r="3.500" fill="#c8522a"/><circle cx="3.700" cy="9" r="2.400" fill="#f8dcc0"/><path d="M0 15.800C0 13 1.500 12 3.700 12S7.400 13 7.400 15.800z" fill="#e22828"/></svg>
<div class="tr" style="left:74px;top:606px">00066:00066</div>
<div class="a" style="left:31px;top:633px;width:11px;height:1px;border-top:1px dotted #9a9a9a"></div>
<div class="cb" style="left:42px;top:625px"></div>
<svg class="a" style="left:56px;top:624px" width="13" height="16" viewBox="0 0 13 16"><circle cx="7.900" cy="3.300" r="2.700" fill="#8a5a2a"/><circle cx="7.900" cy="4.300" r="2" fill="#f4cfa6"/><path d="M5.800 13.500C5.800 8.500 7.800 6.600 9.800 6.600S12.900 8.800 12.900 13.500z" fill="#2a72d8"/><circle cx="3.700" cy="8.100" r="3.500" fill="#c8522a"/><circle cx="3.700" cy="9" r="2.400" fill="#f8dcc0"/><path d="M0 15.800C0 13 1.500 12 3.700 12S7.400 13 7.400 15.800z" fill="#e22828"/></svg>
<div class="tr" style="left:74px;top:624px">00068:00068</div>
<div class="a" style="left:31px;top:651px;width:11px;height:1px;border-top:1px dotted #9a9a9a"></div>
<div class="cb" style="left:42px;top:643px"></div>
<svg class="a" style="left:56px;top:642px" width="13" height="16" viewBox="0 0 13 16"><circle cx="7.900" cy="3.300" r="2.700" fill="#8a5a2a"/><circle cx="7.900" cy="4.300" r="2" fill="#f4cfa6"/><path d="M5.800 13.500C5.800 8.500 7.800 6.600 9.800 6.600S12.900 8.800 12.900 13.500z" fill="#2a72d8"/><circle cx="3.700" cy="8.100" r="3.500" fill="#c8522a"/><circle cx="3.700" cy="9" r="2.400" fill="#f8dcc0"/><path d="M0 15.800C0 13 1.500 12 3.700 12S7.400 13 7.400 15.800z" fill="#e22828"/></svg>
<div class="tr" style="left:74px;top:642px">00069:00069</div>
<div class="a" style="left:31px;top:669px;width:11px;height:1px;border-top:1px dotted #9a9a9a"></div>
<div class="cb" style="left:42px;top:661px"></div>
<svg class="a" style="left:56px;top:660px" width="13" height="16" viewBox="0 0 13 16"><circle cx="7.900" cy="3.300" r="2.700" fill="#8a5a2a"/><circle cx="7.900" cy="4.300" r="2" fill="#f4cfa6"/><path d="M5.800 13.500C5.800 8.500 7.800 6.600 9.800 6.600S12.900 8.800 12.900 13.500z" fill="#2a72d8"/><circle cx="3.700" cy="8.100" r="3.500" fill="#c8522a"/><circle cx="3.700" cy="9" r="2.400" fill="#f8dcc0"/><path d="M0 15.800C0 13 1.500 12 3.700 12S7.400 13 7.400 15.800z" fill="#e22828"/></svg>
<div class="tr" style="left:74px;top:660px">00072:00072</div>
<div class="a" style="left:31px;top:687px;width:11px;height:1px;border-top:1px dotted #9a9a9a"></div>
<div class="cb" style="left:42px;top:679px"></div>
<svg class="a" style="left:56px;top:678px" width="13" height="16" viewBox="0 0 13 16"><circle cx="7.900" cy="3.300" r="2.700" fill="#8a5a2a"/><circle cx="7.900" cy="4.300" r="2" fill="#f4cfa6"/><path d="M5.800 13.500C5.800 8.500 7.800 6.600 9.800 6.600S12.900 8.800 12.900 13.500z" fill="#2a72d8"/><circle cx="3.700" cy="8.100" r="3.500" fill="#c8522a"/><circle cx="3.700" cy="9" r="2.400" fill="#f8dcc0"/><path d="M0 15.800C0 13 1.500 12 3.700 12S7.400 13 7.400 15.800z" fill="#e22828"/></svg>
<div class="tr" style="left:74px;top:678px">99999:99999</div>
<div class="a" style="left:316px;top:207px;width:1050px;height:28px;background:#e4edfb"></div>
<div class="a" style="left:315px;top:207px;width:1051px;height:25px;background:#c0c0c0;border-radius:5px 0 0 5px"></div>
<div class="a" style="left:319px;top:213px;width:2px;height:16px;background:repeating-linear-gradient(#fff 0,#fff 2px,transparent 2px,transparent 4px)"></div>
<svg class="a" style="left:328px;top:212px" width="14" height="16" viewBox="0 0 14 16"><path d="M1.500 7.500C1.500 4 4 2.500 7 2.500h2.500V0.500L13 3.800 9.500 7V5H7C5 5 4 6 4 7.500z" fill="#3f7fe0"/><path d="M12.500 8.500C12.500 12 10 13.500 7 13.500H4.500v2L1 12.200 4.500 9v2H7c2 0 3-1 3-2.500z" fill="#2f6ad0"/></svg>
<div class="t sx" style="left:345px;top:213px;font-size:14px;color:#000;--k:.91">Làm tươi</div>
<div class="a" style="left:410px;top:213px;width:1px;height:17px;background:#fff"></div><div class="a" style="left:409px;top:213px;width:1px;height:17px;background:#a8a8a8"></div>
<svg class="a" style="left:414px;top:210px" width="18" height="18" viewBox="0 0 18 18"><rect x="0.500" y="5.500" width="14" height="10" fill="#f4f4f4" stroke="#9a9a9a"/><rect x="2" y="7" width="4.500" height="5.500" fill="#f0b8a0"/><rect x="2" y="10.500" width="4.500" height="2" fill="#d0303a"/><path d="M8 8h5M8 10h5M8 12h5" stroke="#b8b8b8"/><circle cx="12.300" cy="6.300" r="4.200" fill="#22b020"/><path d="M12.300 3.800v5M9.800 6.300h5" stroke="#fff" stroke-width="1.600"/></svg>
<div class="t sx" style="left:433px;top:213px;font-size:14px;color:#000;--k:.91">Thêm mới</div>
<svg class="a" style="left:502px;top:213px" width="14" height="14" viewBox="0 0 14 14"><rect x="0.500" y="0.500" width="13" height="13" rx="1" fill="#2f6fd8" stroke="#1c4aa8"/><rect x="3" y="1" width="8" height="4.500" fill="#fff"/><rect x="8" y="1.500" width="2" height="3" fill="#222"/><rect x="2.500" y="7.500" width="9" height="6" fill="#fff"/></svg>
<div class="t sx" style="left:520px;top:213px;font-size:14px;color:#000;--k:.91">Cập nhật</div>
<svg class="a" style="left:583px;top:214px" width="13" height="13" viewBox="0 0 13 13"><path d="M1.500 1.500l10 10M11.500 1.500l-10 10" stroke="#8c8c8c" stroke-width="2.600"/></svg>
<div class="t sx" style="left:600px;top:213px;font-size:14px;color:#8a8a8a;--k:.91">Xóa</div>
<svg class="a" style="left:631px;top:213px" width="13" height="13" viewBox="0 0 13 13"><circle cx="5" cy="4" r="2.500" fill="#a8a8a8"/><path d="M1 11c0-3 2-4 4-4s4 1 4 4z" fill="#9c9c9c"/><path d="M8 8l4 2-4 2z" fill="#8c8c8c"/></svg>
<div class="t sx" style="left:648px;top:213px;font-size:14px;color:#8a8a8a;--k:.91">Đổi phòng ban</div>
<div class="a" style="left:743px;top:213px;width:1px;height:17px;background:#fff"></div><div class="a" style="left:742px;top:213px;width:1px;height:17px;background:#a8a8a8"></div>
<svg class="a" style="left:747px;top:212px" width="16" height="16" viewBox="0 0 16 16"><rect x="0.500" y="0.500" width="14" height="12" fill="#fff" stroke="#2f5fb8"/><rect x="1" y="1" width="13" height="2.500" fill="#2f6fd8"/><path d="M2.500 5.500h9M2.500 7.500h9M2.500 9.500h6" stroke="#c05a5a"/><circle cx="11.500" cy="9.500" r="2" fill="#f0c090"/><path d="M8 15.500c0-3 1.500-4 3.500-4s3.500 1 3.500 4z" fill="#f08020"/></svg>
<div class="t sx" style="left:766px;top:213px;font-size:14px;color:#000;--k:.91">Danh sách</div>
<div class="a" style="left:839px;top:213px;width:1px;height:17px;background:#fff"></div><div class="a" style="left:838px;top:213px;width:1px;height:17px;background:#a8a8a8"></div>
<svg class="a" style="left:845px;top:213px" width="13" height="13" viewBox="0 0 13 13"><circle cx="6.500" cy="4" r="3" fill="#8a8a8a"/><path d="M1 12.500c0-3.500 2.500-4.500 5.500-4.500s5.500 1 5.500 4.500z" fill="#8a8a8a"/></svg>
<div class="t sx" style="left:862px;top:213px;font-size:14px;color:#000;--k:.91">Hình nhân viên</div>
<div class="a" style="left:316px;top:232px;width:1050px;height:24px;background:linear-gradient(#c6d9f7,#f1f6fe)"></div>
<div class="a" style="left:315px;top:255px;width:1051px;height:473px;background:linear-gradient(#8fb1e7,#a8c5f0 40%,#dce9fd);border-left:1px solid #5d83c9;border-top:1px solid #5d83c9"></div>
<div class="a" style="left:486px;top:255px;width:880px;height:1px;background:#2f4f92"></div>
<svg class="a" style="left:314px;top:233px" width="460" height="24" viewBox="0 0 460 24">
<defs><linearGradient id="ta" x1="0" x2="0" y1="0" y2="1"><stop offset="0" stop-color="#f4f8fe"/><stop offset=".45" stop-color="#cfdff8"/><stop offset="1" stop-color="#8fb1e7"/></linearGradient>
<linearGradient id="ti" x1="0" x2="0" y1="0" y2="1"><stop offset="0" stop-color="#eaf1fd"/><stop offset="1" stop-color="#cbdbf6"/></linearGradient></defs>
<path d="M172.500 22.500V5.500q0-3 3-3H290.500q3 0 3 3V22.500z" fill="url(#ti)" stroke="#1f4aa8"/>
<path d="M173.500 22V6q0-2.500 2.500-2.500H290" fill="none" stroke="#fff" stroke-opacity=".8"/>
<path d="M294.500 22.500V5.500q0-3 3-3H440.500q3 0 3 3V22.500z" fill="url(#ti)" stroke="#1f4aa8"/>
<path d="M295.500 22V6q0-2.500 2.500-2.500H440" fill="none" stroke="#fff" stroke-opacity=".8"/>
<path d="M1.500 24V21.500H8L24 4.500q2-2 5-2H168.500q3 0 3 3V24z" fill="url(#ta)" stroke="#5d83c9"/>
<path d="M9 21.500L25 5q1.500-1.500 4-1.500H168" fill="none" stroke="#fff" stroke-opacity=".9"/>
</svg>
<div class="t sx" style="left:351px;top:240px;font-size:14px;font-weight:bold;--k:.921">Thông tin nhân viên</div>
<div class="t sx" style="left:497px;top:241px;font-size:14px;--k:.93">Thông tin vân tay</div>
<div class="t sx" style="left:619px;top:241px;font-size:14px;--k:.93">Tạo lệnh cho máy chủ</div>
<div class="a" style="left:316px;top:270px;width:172px;height:171px;border:1px solid #dcdfe6;border-top:none"></div><div class="a" style="left:316px;top:270px;width:7px;height:1px;background:#dcdfe6"></div><div class="a" style="left:411px;top:270px;width:77px;height:1px;background:#dcdfe6"></div><div class="lbl gl" style="left:325px;top:263px">Hình nhân viên</div>
<div class="a" style="left:496px;top:270px;width:507px;height:171px;border:1px solid #dcdfe6;border-top:none"></div><div class="a" style="left:496px;top:270px;width:7px;height:1px;background:#dcdfe6"></div><div class="a" style="left:610px;top:270px;width:393px;height:1px;background:#dcdfe6"></div><div class="lbl gl" style="left:505px;top:263px">Thông tin căn bản</div>
<div class="a" style="left:1008px;top:270px;width:354px;height:171px;border:1px solid #dcdfe6;border-top:none"></div><div class="a" style="left:1008px;top:270px;width:7px;height:1px;background:#dcdfe6"></div><div class="a" style="left:1194px;top:270px;width:168px;height:1px;background:#dcdfe6"></div><div class="lbl gl" style="left:1017px;top:263px">Thông tin trên máy chấm công</div>
<div class="a" style="left:317px;top:461px;width:686px;height:186px;border:1px solid #dcdfe6;border-top:none"></div><div class="a" style="left:317px;top:461px;width:7px;height:1px;background:#dcdfe6"></div><div class="a" style="left:431px;top:461px;width:572px;height:1px;background:#dcdfe6"></div><div class="lbl gl" style="left:326px;top:454px">Thông tin cá nhân</div>
<div class="a" style="left:1008px;top:462px;width:354px;height:185px;border:1px solid #dcdfe6;border-top:none"></div><div class="a" style="left:1008px;top:462px;width:7px;height:1px;background:#dcdfe6"></div><div class="a" style="left:1115px;top:462px;width:247px;height:1px;background:#dcdfe6"></div><div class="lbl gl" style="left:1017px;top:455px">Thông tin liên hệ</div>
<div class="a" style="left:333px;top:284px;width:139px;height:146px;background:#e1e1e1"></div>
<svg class="a" style="left:333px;top:284px" width="139" height="146" viewBox="0 0 139 146"><defs><linearGradient id="pg" x1="0" x2="0" y1="0" y2="1"><stop offset="0" stop-color="#b2b2b2"/><stop offset="1" stop-color="#989898"/></linearGradient><linearGradient id="pb" x1="0" x2="0" y1="0" y2="1"><stop offset="0" stop-color="#9a9a9a"/><stop offset="1" stop-color="#8c8c8c"/></linearGradient></defs>
<path d="M22.900 120C24 108 26 101.500 33.500 97.500L52.700 86Q69.200 96.500 85.600 86L104.500 97.500C112 101.500 114 108 115 120Z" fill="url(#pb)" stroke="#828282" stroke-width="1"/>
<path d="M69.200 24c14 0 23 9.500 23 24 0 6-1 12-3.500 18.500-3.500 9-10 18.500-19.500 18.500s-16-9.500-19.500-18.500C47.200 60 46.200 54 46.200 48c0-14.500 9-24 23-24z" fill="url(#pg)" stroke="#8e8e8e" stroke-width="1"/></svg>
<div class="lbl" style="left:520px;top:286px">Mã nhân viên</div>
<div class="lbl" style="left:520px;top:311px">Tên nhân viên</div>
<div class="lbl" style="left:520px;top:336px">Phòng ban</div>
<div class="lbl" style="left:520px;top:361px">Chức danh</div>
<div class="lbl" style="left:520px;top:386px">Giới tính</div>
<div class="lbl" style="left:520px;top:411px">Ngày vào làm việc</div>
<div class="inp" style="left:660px;top:282px;width:299px;height:22px;line-height:22px;"><span class="sxi">00002</span></div>
<div class="inp" style="left:660px;top:306px;width:299px;height:22px;line-height:22px;"><span class="sxi">Nguyên Gia Bảo</span></div>
<div class="cmb" style="left:660px;top:330px;width:298px;height:24px;line-height:25px;background:#fff;border-color:#7a7a7a"><span class="sxi"><span style="margin-left:22px">!Nhân viên mới</span></span></div><svg class="a" style="left:943px;top:340px" width="11" height="7" viewBox="0 0 11 7"><path d="M1 1l4.5 4.5L10 1" fill="none" stroke="#333" stroke-width="1.1"/></svg>
<svg class="a" style="left:665px;top:335px" width="14" height="14" viewBox="0 0 14 14"><circle cx="7" cy="7" r="6" fill="#2fb344"/><circle cx="7" cy="7" r="6" fill="none" stroke="#8fdc9a" stroke-width="1"/><path d="M3.8 7.2l2.300 2.300 4.200-4.600" fill="none" stroke="#fff" stroke-width="1.800"/></svg>
<div class="cmb" style="left:660px;top:358px;width:299px;height:24px;line-height:22px;background:#e1e1e1"><span class="sxi">Chưa sắp xếp</span></div><svg class="a" style="left:944px;top:368px" width="11" height="7" viewBox="0 0 11 7"><path d="M1 1l4.5 4.5L10 1" fill="none" stroke="#333" stroke-width="1.1"/></svg>
<div class="a" style="left:966px;top:359px;width:27px;height:22px;background:#e1e1e1;border:1px solid #adadad;font-size:12px;text-align:center;line-height:20px">...</div>
<div class="rb on" style="left:662px;top:387px"></div><div class="lbl" style="left:681px;top:387px">Nữ</div>
<div class="rb" style="left:744px;top:387px"></div><div class="lbl" style="left:763px;top:388px">Nam</div>
<div class="inp" style="left:661px;top:408px;width:298px;height:22px;line-height:22px;padding-left:1px"><span class="sxi">2019-10-20</span></div>
<svg class="a" style="left:931px;top:412px" width="24" height="14" viewBox="0 0 24 14"><rect x="1.500" y="1.500" width="9" height="10" rx="1" fill="#e8e8e8" stroke="#8a8a8a"/><path d="M3 4.500h6M3 6.500h6M3 8.500h6M5 3v7M7 3v7" stroke="#8a8a8a" stroke-width=".7"/><path d="M13.500 5h7l-3.500 4z" fill="#3b5a82"/></svg>
<div class="lbl" style="left:1022px;top:290px">Mã chấm công</div>
<div class="lbl" style="left:1022px;top:316px">Tên chấm công</div>
<div class="lbl" style="left:1022px;top:342px">Mã thẻ</div>
<div class="lbl" style="left:1022px;top:368px">Mật mã</div>
<div class="lbl" style="left:1022px;top:394px">Phần quyền</div>
<div class="lbl" style="left:1022px;top:420px">Cho phép</div>
<div class="inp" style="left:1142px;top:286px;width:201px;height:21px;line-height:21px;background:#f0f0f0;border-color:#d5d5d5;color:#6d6d6d"><span class="sxi">2</span></div>
<div class="inp" style="left:1142px;top:310px;width:201px;height:22px;line-height:22px;"><span class="sxi">Nguyen Gia Bao</span></div>
<div class="inp" style="left:1142px;top:335px;width:201px;height:22px;line-height:22px;"><span class="sxi">0000000000</span></div>
<div class="inp" style="left:1142px;top:360px;width:201px;height:22px;line-height:22px;"><span class="sxi"></span></div>
<div class="cmb" style="left:1142px;top:386px;width:201px;height:24px;line-height:22px;background:#e1e1e1"><span class="sxi">Nhân viên</span></div><svg class="a" style="left:1328px;top:396px" width="11" height="7" viewBox="0 0 11 7"><path d="M1 1l4.5 4.5L10 1" fill="none" stroke="#333" stroke-width="1.1"/></svg>
<div class="rb on" style="left:1144px;top:421px"></div><div class="lbl" style="left:1163px;top:421px">Có</div>
<div class="rb" style="left:1227px;top:422px"></div><div class="lbl" style="left:1246px;top:422px">Không</div>
<div class="lbl" style="left:335px;top:479px">Ngày sinh</div>
<div class="lbl" style="left:335px;top:505px">Nơi sinh</div>
<div class="lbl" style="left:335px;top:531px">Nguyên quán</div>
<div class="lbl" style="left:335px;top:557px">Số CMND</div>
<div class="lbl" style="left:335px;top:583px">Nơi cấp</div>
<div class="lbl" style="left:335px;top:608px">Dân tộc</div>
<div class="inp" style="left:477px;top:472px;width:175px;height:22px;line-height:22px;"><span class="sxi"></span></div>
<div class="cmb" style="left:477px;top:498px;width:175px;height:24px;line-height:22px;background:#e1e1e1"><span class="sxi">An Giang</span></div><svg class="a" style="left:637px;top:508px" width="11" height="7" viewBox="0 0 11 7"><path d="M1 1l4.5 4.5L10 1" fill="none" stroke="#333" stroke-width="1.1"/></svg>
<div class="inp" style="left:477px;top:524px;width:477px;height:22px;line-height:22px;"><span class="sxi"></span></div>
<div class="inp" style="left:477px;top:550px;width:477px;height:22px;line-height:22px;"><span class="sxi"></span></div>
<div class="inp" style="left:477px;top:576px;width:477px;height:22px;line-height:22px;"><span class="sxi"></span></div>
<div class="cmb" style="left:477px;top:603px;width:175px;height:24px;line-height:22px;background:#e1e1e1"><span class="sxi">Kinh</span></div><svg class="a" style="left:637px;top:613px" width="11" height="7" viewBox="0 0 11 7"><path d="M1 1l4.5 4.5L10 1" fill="none" stroke="#333" stroke-width="1.1"/></svg>
<div class="lbl" style="left:712px;top:608px">Quốc tịch</div>
<div class="cmb" style="left:779px;top:603px;width:175px;height:24px;line-height:22px;background:#e1e1e1"><span class="sxi">Việt Nam</span></div><svg class="a" style="left:939px;top:613px" width="11" height="7" viewBox="0 0 11 7"><path d="M1 1l4.5 4.5L10 1" fill="none" stroke="#333" stroke-width="1.1"/></svg>
<div class="lbl" style="left:1022px;top:484px">Tên thường gọi</div>
<div class="lbl" style="left:1022px;top:512px">Địa chỉ hiện tại</div>
<div class="lbl" style="left:1022px;top:537px">Điện thoại liên lạc</div>
<div class="lbl" style="left:1022px;top:565px">Người liên hệ</div>
<div class="inp" style="left:1142px;top:476px;width:201px;height:22px;line-height:22px;"><span class="sxi"></span></div>
<div class="inp" style="left:1142px;top:503px;width:201px;height:22px;line-height:22px;"><span class="sxi"></span></div>
<div class="inp" style="left:1142px;top:531px;width:201px;height:22px;line-height:22px;"><span class="sxi"></span></div>
<div class="inp" style="left:1142px;top:559px;width:201px;height:22px;line-height:22px;"><span class="sxi"></span></div>
<div class="t" style="left:1073px;top:653px;font-size:19.9px;color:#a2a8b2">Activate Windows</div>
<div class="t" style="left:1073px;top:678px;font-size:14.95px;color:#a2a8b2">Go to Settings to activate Windows.</div>
<div class="ybox" style="left:60px;top:9px;width:90px;height:43px;border-width:5px"></div>
<div class="num" style="left:128px;top:10px;transform:scaleX(.78)">1</div>
<div class="ybox" style="left:179px;top:42px;width:75px;height:93px;border-width:5px"></div>
<div class="num" style="left:196px;top:59px">2</div>
<div class="ybox" style="left:66px;top:292px;width:138px;height:29px;border-width:5px"></div>
<div class="num" style="left:165px;top:290px">3</div>
<div class="ybox" style="left:656px;top:302px;width:272px;height:31px;border-width:5px"></div>
<div class="num" style="left:825px;top:295px">4</div>
<div class="ybox" style="left:1133px;top:308px;width:162px;height:30px;border-width:5px"></div>
<div class="num" style="left:1261px;top:302px">5</div>
<div class="ybox" style="left:492px;top:172px;width:85px;height:64px;border-width:5px"></div>
<div class="num" style="left:536px;top:180px">6</div>
<div class="a" style="left:0;top:728px;width:1366px;height:40px;background:#1e1e1f"></div>
<div class="a" style="left:442px;top:728px;width:48px;height:40px;background:#48484b"></div>
<div class="a" style="left:103px;top:766px;width:40px;height:2px;background:#76b9ed"></div>
<div class="a" style="left:152px;top:766px;width:40px;height:2px;background:#76b9ed"></div>
<div class="a" style="left:299px;top:766px;width:40px;height:2px;background:#76b9ed"></div>
<div class="a" style="left:348px;top:766px;width:40px;height:2px;background:#76b9ed"></div>
<div class="a" style="left:397px;top:766px;width:40px;height:2px;background:#76b9ed"></div>
<div class="a" style="left:442px;top:766px;width:48px;height:2px;background:#76b9ed"></div>
<div class="a" style="left:495px;top:766px;width:40px;height:2px;background:#76b9ed"></div>
<svg class="a" style="left:15.500px;top:739.500px" width="17" height="17" viewBox="0 0 18 18"><path d="M0 2.500L7.500 1.400V8.500H0zM8.500 1.300L17.500 0V8.500H8.500zM0 9.500H7.500V16.600L0 15.500zM8.500 9.500H17.500V18L8.500 16.700z" fill="#fff"/></svg>
<svg class="a" style="left:62px;top:737px" width="20" height="20" viewBox="0 0 20 20"><circle cx="12" cy="8" r="5.300" fill="none" stroke="#fff" stroke-width="1.500"/><path d="M8.200 11.800L2 18" stroke="#fff" stroke-width="1.500"/></svg>
<svg class="a" style="left:112px;top:738px" width="22" height="20" viewBox="0 0 22 20"><path d="M1 2.500q0-1.500 1.500-1.500H8l2 2h10.500q1 0 1 1V18H1z" fill="#f5c84a"/><path d="M1 5h21v13H1z" fill="#fbe08a"/><rect x="2.500" y="2" width="3" height="1.200" fill="#3aa0e0"/><path d="M5.500 18.500V12h11v6.500h-3V15h-5v3.500z" fill="#3fa7ea"/><path d="M5.500 12h11v2h-11z" fill="#5fc0f5"/></svg>
<svg class="a" style="left:161px;top:737px" width="22" height="22" viewBox="0 0 22 22"><path d="M1 10C1.800 4 6 .5 11.500 .5c6 0 9.500 4.300 9.500 10v2.300H7.600c.2 3 2.600 4.600 5.800 4.600 2.300 0 4.300-.6 6.300-1.700v4.200c-2.200 1.100-4.600 1.600-7.300 1.600-6 0-9.700-3.600-9.700-9 0-3.600 1.900-6.400 4.800-7.900C5.400 5.800 4 7.500 3.300 10zM7.700 9h7.700c0-2.700-1.500-4.300-3.800-4.300S8 6.500 7.700 9z" fill="#1382d8"/></svg>
<svg class="a" style="left:209px;top:736px" width="24" height="24" viewBox="0 0 24 24"><path d="M7.500 7V5.500q0-4 4.500-4t4.500 4V7" fill="none" stroke="#fff" stroke-width="1.400"/><path d="M.5 7h23l-.8 14.500q-.1 1.500-1.600 1.500H2.900q-1.500 0-1.600-1.500z" fill="#fff"/><rect x="6.500" y="10" width="4.800" height="4.800" fill="#f25022"/><rect x="12.500" y="10" width="4.800" height="4.800" fill="#7fba00"/><rect x="6.500" y="16" width="4.800" height="4.800" fill="#00a4ef"/><rect x="12.500" y="16" width="4.800" height="4.800" fill="#ffb900"/></svg>
<svg class="a" style="left:257px;top:737px" width="26" height="20" viewBox="0 0 26 20"><path d="M.5 7.500L13 .5l12.500 7V19.500H.5z" fill="#fff"/><path d="M.5 7.500h25L14 14l4 5.500z" fill="#1e1e1f"/><path d="M.5 8.200V19.500h17L13 13.500l7-5.300z" fill="#fff" opacity="0"/><path d="M.5 7.500L13 1.500l12.500 6" fill="none" stroke="#fff" stroke-width="1.500"/></svg>
<svg class="a" style="left:307px;top:736px" width="24" height="24" viewBox="0 0 24 24"><circle cx="12" cy="12" r="11.500" fill="#ea4335"/><path d="M12 12L2.040 6.250A11.500 11.500 0 0 0 10.500 23.400L17 13z" fill="#34a853"/><path d="M12 12h11.500A11.500 11.500 0 0 1 10.500 23.400L17.500 12z" fill="#fbbc05"/><path d="M12 6.500h10.100A11.500 11.500 0 0 1 23.500 12 11.500 11.500 0 0 1 10.500 23.400L16.800 14.700z" fill="#fbbc05"/><circle cx="12" cy="12" r="5.500" fill="#fff"/><circle cx="12" cy="12" r="4.300" fill="#4285f4"/></svg>
<svg class="a" style="left:356px;top:735px" width="25" height="26" viewBox="0 0 25 26"><rect x="1" y="1.500" width="23" height="22" rx="7" fill="#1a6ef2"/><path d="M4 1h17q3.500 0 3.500 3.500v13q0 3.500-3.500 3.500H8.500L3.500 23.500l.8-3Q.5 19.500.5 17.500v-13Q.5 1 4 1z" fill="#fff"/><text x="12.600" y="14.800" font-family="Liberation Sans, sans-serif" font-weight="bold" font-size="9" fill="#1a6ef2" text-anchor="middle">Zalo</text></svg>
<svg class="a" style="left:404px;top:735px" width="26" height="26" viewBox="0 0 26 26"><circle cx="13" cy="13" r="12.500" fill="#fff"/><circle cx="13" cy="13" r="11.200" fill="#6fb03a"/><circle cx="13" cy="13" r="6" fill="#fff"/><circle cx="13" cy="13" r="3.200" fill="#6fb03a"/><path d="M13 13L17 0h9v8z" fill="#fff"/><path d="M15 8.500L17.500 2l1.800.8zM17.200 10.500L23 4.500l1.300 1.500z" fill="#f07818"/></svg>
<svg class="a" style="left:454px;top:737px" width="23" height="22" viewBox="0 0 23 22"><rect x="0.500" y="0.500" width="22" height="21" rx="1.500" fill="#f4f7fc" stroke="#2a5fb8"/><text x="12" y="9" font-family="Liberation Sans, sans-serif" font-weight="bold" font-style="italic" font-size="8.500" fill="#1f5fc0" text-anchor="middle" textLength="17">MCC</text><text x="14.500" y="16.500" font-family="Liberation Sans, sans-serif" font-weight="bold" font-style="italic" font-size="8" fill="#e02030" text-anchor="middle" textLength="11">PRO</text><circle cx="5.500" cy="13.500" r="3.500" fill="#fff" stroke="#2a5fb8"/><path d="M2 13.500q3.500-2 7 0" stroke="#2a5fb8" fill="none"/></svg>
<svg class="a" style="left:502px;top:735px" width="26" height="26" viewBox="0 0 26 26"><path d="M10.500 5.500C16 4 21.500 7 21.500 12.500c0 6-5 9.500-11 9.500C4.500 22 .5 18.500 .5 14 .5 9.500 4.500 7 10.500 5.500zM13 17.500a2.200 2.200 0 1 0 0.100 0z" fill="#a9d3ee" fill-rule="evenodd"/><circle cx="5.500" cy="14" r="1.800" fill="#e0403a"/><circle cx="9" cy="10" r="1.800" fill="#58b848"/><circle cx="14" cy="9" r="1.800" fill="#f0a020"/><path d="M22.500 2l2 1.200L15 20l-2.500 3 .5-4z" fill="#e08a2a"/><path d="M22 .5l3 2-1.800 3-2.800-1.800z" fill="#d8c8a8"/></svg>
<svg class="a" style="left:1079px;top:739px" width="18" height="16" viewBox="0 0 18 16"><circle cx="11.500" cy="4" r="2.600" fill="none" stroke="#fff" stroke-width="1.200"/><path d="M7.500 12.500c0-3.500 1.800-5 4-5s4 1.500 4 5" fill="none" stroke="#fff" stroke-width="1.200"/><circle cx="5" cy="7.500" r="2.200" fill="none" stroke="#fff" stroke-width="1.200"/><path d="M1 15c0-3 1.700-4.500 4-4.500s4 1.500 4 4.500" fill="none" stroke="#fff" stroke-width="1.200"/></svg>
<svg class="a" style="left:1116px;top:744px" width="14" height="8" viewBox="0 0 14 8"><path d="M1 7l6-6 6 6" fill="none" stroke="#fff" stroke-width="1.300"/></svg>
<svg class="a" style="left:1138px;top:741px" width="18" height="12" viewBox="0 0 18 12"><path d="M4.500 11.500a3.500 3.500 0 0 1-.5-7 5 5 0 0 1 9.300 1 3.200 3.200 0 0 1 .7 6z" fill="#d8d8d8"/></svg>
<svg class="a" style="left:1162px;top:741px" width="18" height="12" viewBox="0 0 18 12"><rect x="4.500" y="3" width="11.500" height="6.500" fill="none" stroke="#fff" stroke-width="1"/><rect x="16" y="5" width="1.300" height="2.500" fill="#fff"/><path d="M8 4.500l4 3.500M12 4.500l-4 3.500" stroke="#fff" stroke-width="1"/><path d="M1.500 1v2.500M4 1v2.500M.8 3.500h4v2q0 1.500-2 1.500t-2-1.500zM2.800 7v4" stroke="#fff" stroke-width="1" fill="none"/></svg>
<svg class="a" style="left:1189px;top:741px" width="16" height="14" viewBox="0 0 16 14"><path d="M2 13A11 11 0 0 1 13 2M5 13A8 8 0 0 1 13 5M8 13A5 5 0 0 1 13 8" fill="none" stroke="#fff" stroke-width="1.200"/><circle cx="12.500" cy="12" r="1.300" fill="#fff"/></svg>
<div class="t" style="left:1213px;top:742px;font-size:11.500px;color:#fff">ENG</div>
<div class="t" style="left:1256px;top:733px;font-size:11.500px;color:#fff">3:24 PM</div>
<div class="t" style="left:1249px;top:751px;font-size:11.500px;color:#fff">20-10-2019</div>
<svg class="a" style="left:1324px;top:739px" width="26" height="24" viewBox="0 0 26 24"><path d="M1.500 1.500h15v11h-10l-3 3v-3h-2z" fill="#fff"/><path d="M4 4.500h10M4 7h10M4 9.500h7" stroke="#1e1e1f" stroke-width=".9"/><circle cx="16.500" cy="14" r="6.800" fill="#1e1e1f" stroke="#c8c8c8" stroke-width="1"/><text x="16.500" y="17.800" font-family="Liberation Sans, sans-serif" font-size="10.500" fill="#fff" text-anchor="middle">2</text></svg>
</body></html>
